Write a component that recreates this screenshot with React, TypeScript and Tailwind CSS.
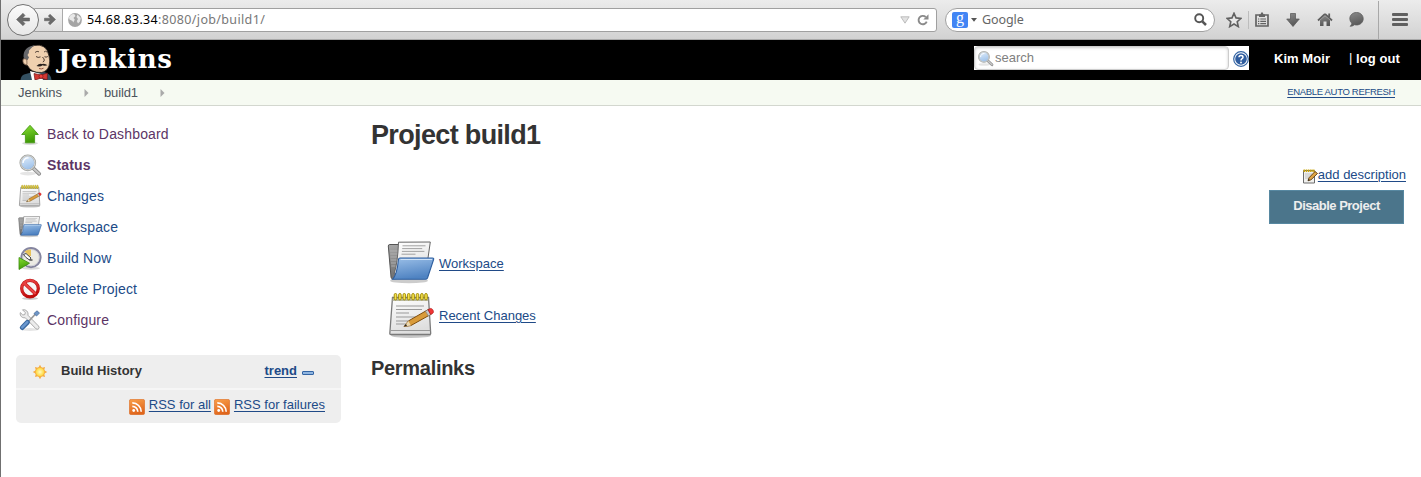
import React from "react";

const sans = "font-['Liberation_Sans',Arial,sans-serif]";
const chrome = "font-['Noto_Sans',sans-serif]";
const link = "underline underline-offset-2 decoration-1 text-[#204a87]";

type IconProps = { className?: string };

function Gradients() {
  const grads: [string, string, string][] = [
    ["green", "#8ae234", "#3f9a06"],
    ["blue", "#9cc0e8", "#4f83c2"],
    ["lens", "#e4f0fc", "#9fc2ea"],
    ["paper", "#ffffff", "#dedede"],
    ["grey", "#a8a8a8", "#6c6c6c"],
    ["tool", "#8a8a8a", "#585858"],
    ["feed", "#f9a04a", "#e0661c"],
    ["red", "#f04b4b", "#c00a0a"],
  ];
  return (
    <svg className="absolute size-0" aria-hidden="true">
      <defs>
        {grads.map(([id, a, b]) => (
          <linearGradient key={id} id={id} x1="0" y1="0" x2="0.3" y2="1">
            <stop offset="0" stopColor={a} />
            <stop offset="1" stopColor={b} />
          </linearGradient>
        ))}
        <radialGradient id="sun">
          <stop offset="0" stopColor="#fffbc0" />
          <stop offset="1" stopColor="#ffd42e" />
        </radialGradient>
      </defs>
    </svg>
  );
}

function UpArrow({ className }: IconProps) {
  return (
    <svg viewBox="0 0 24 24" className={className}>
      <ellipse cx="12" cy="21.3" rx="8" ry="1.6" fill="#000" opacity=".15" />
      <path d="M12 3.3 20.3 12.5H16.6V20.8H7.4V12.5H3.7Z" fill="url(#green)" stroke="#4a9a18" strokeWidth=".9" strokeLinejoin="round" />
    </svg>
  );
}

function Magnifier({ className }: IconProps) {
  return (
    <svg viewBox="0 0 24 24" className={className}>
      <ellipse cx="10" cy="20.6" rx="8" ry="1.8" fill="#000" opacity=".1" />
      <path d="m15.2 15.2 6 5.6" stroke="#8a8a8a" strokeWidth="3.8" strokeLinecap="round" />
      <path d="m15.2 15.2 6 5.6" stroke="#c8c8c8" strokeWidth="2" strokeLinecap="round" />
      <circle cx="9.8" cy="9.8" r="7.4" fill="url(#lens)" stroke="#a0a29e" strokeWidth="1.9" />
      <circle cx="9.8" cy="9.8" r="7.1" fill="none" stroke="#e4e4e4" strokeWidth=".8" />
      <path d="M5 10a5 5 0 0 1 5.5-5" stroke="#fff" strokeWidth="1.3" fill="none" />
    </svg>
  );
}

function Notepad({ className }: IconProps) {
  return (
    <svg viewBox="0 0 48 48" className={className}>
      <ellipse cx="24" cy="44.5" rx="20" ry="2.5" fill="#000" opacity=".22" />
      <path d="M5.5 6.5h36l2.2 36q0 1-1 1H3.8q-1 0-1-1Z" fill="url(#paper)" stroke="#7a7a7a" strokeWidth="1.3" />
      <path d="M3.8 39.5h39.4" stroke="#999" strokeWidth="1" />
      <path d="M5.8 7h35.4v3H5.6Z" fill="#b9b99f" />
      <path d="M9 15h28M9 18.5h26M9 22h13M9 26h20M9 30h17M9 33h14" stroke="#999" strokeWidth="1" />
      {[8.5, 12.9, 17.3, 21.7, 26.1, 30.5, 34.9, 39].map((x) => (
        <rect key={x} x={x - 1.3} y="2.5" width="2.6" height="6.4" rx="1.3" fill="#f5e04a" stroke="#9a8600" strokeWidth=".9" />
      ))}
      <path d="m17 35.5 4.5-5.6 20-11.5 2.7 4.8-20.4 11.4Z" fill="#d99b3a" stroke="#7f4c0a" strokeWidth="1" strokeLinejoin="round" />
      <path d="m17 35.5 4.5-5.6 2.3 4.7Z" fill="#ecd9b0" />
      <path d="m17 35.5 2-2.4 1 1.6Z" fill="#222" />
      <path d="m38.5 20.2 2.5-1.5 2.7 4.8-2.4 1.4Z" fill="#c9c9c9" stroke="#777" strokeWidth=".6" />
      <path d="m41 18.7 2.2-1.2c2-.8 4.5 3.3 2.6 4.7l-2.1 1.3Z" fill="#ef3535" stroke="#a11" strokeWidth=".6" />
    </svg>
  );
}

function SmallNote({ className }: IconProps) {
  return (
    <svg viewBox="0 0 16 16" className={className}>
      <path d="M1.500 2.500h11v12.500h-11Z" fill="#f0f0ee" stroke="#6c6c6c" strokeWidth="1" />
      <path d="M3 6h7M3 8h6M3 10h4" stroke="#b5b5b5" strokeWidth=".8" />
      <path d="M1.500 2.800h11.500" stroke="#c9a50a" strokeWidth="2.600" strokeDasharray="1.500 .7" />
      <path d="M6 12.800 7 9.800 13 3.500 15.500 5.500 9 11.800Z" fill="#e0a545" stroke="#5b3a0c" strokeWidth=".9" />
      <path d="M6 12.800 6.600 11 7.900 12.100Z" fill="#222" />
    </svg>
  );
}

function Folder({ className }: IconProps) {
  return (
    <svg viewBox="0 0 48 48" className={className}>
      <ellipse cx="22" cy="41.8" rx="19" ry="2.5" fill="#000" opacity=".2" />
      <path d="M1.300 7q0-1.500 1.500-1.500h10l1.600 2H38v29L5.500 40Q4 39.500 4 38Z" fill="url(#grey)" stroke="#555" strokeWidth="1" />
      <path d="M3 12h10M3.300 15h10M3.500 18h9M3.800 21h8M4 24h7M4.300 27h6" stroke="#b5b5b5" strokeWidth=".8" />
      <path d="M11.500 3.200 43.300 3 40 26 7 35Q10.800 24 11.500 3.200Z" fill="url(#paper)" stroke="#666" strokeWidth="1" />
      <path d="M15.500 6.800h23M15.200 9.600h20M14.900 12.400h22.500M14.500 15.200h14" stroke="#999" strokeWidth=".9" />
      <path d="M13 19H45.500q1.600 0 1.100 1.500L40.500 39q-.6 1.300-2 1.300H5.500q4.500-4 6-20 .2-1.300 1.500-1.300Z" fill="url(#blue)" stroke="#2f5f9f" strokeWidth="1.100" />
      <path d="M13.500 20.500H45" stroke="#cfe2f7" strokeWidth="1" />
    </svg>
  );
}

function BuildClock({ className }: IconProps) {
  return (
    <svg viewBox="0 0 24 24" className={className}>
      <ellipse cx="13" cy="22.300" rx="9" ry="1.500" fill="#000" opacity=".15" />
      <circle cx="13" cy="11.600" r="9.600" fill="#ecebe4" stroke="#85859f" strokeWidth="2" />
      <circle cx="13" cy="11.600" r="8.200" fill="none" stroke="#bfbfcf" strokeWidth=".6" />
      <path d="M11 10 6.500 5.500Q9.500 3.400 13 3.600V10Z" fill="#e8c35a" />
      <path d="M5.500 8.500 8 7.500l5 4.500-1.500 2L8 11.500Z" fill="#fff" stroke="#333" strokeWidth=".9" />
      <path d="M11.500 14h3" stroke="#333" strokeWidth="1.300" />
      <path d="M1 11.500 11.500 17.200 1 23.500Z" fill="url(#green)" stroke="#3b8a0d" strokeWidth=".8" strokeLinejoin="round" />
    </svg>
  );
}

function NoEntry({ className }: IconProps) {
  return (
    <svg viewBox="0 0 24 24" className={className}>
      <ellipse cx="12" cy="21.500" rx="8" ry="1.500" fill="#000" opacity=".2" />
      <circle cx="12" cy="11.600" r="8.300" fill="#f6f6f6" stroke="#b91414" strokeWidth="3.200" />
      <path d="m6.400 6.200 11.200 10.800" stroke="#c51818" strokeWidth="3.300" />
      <circle cx="12" cy="11.600" r="8.300" fill="none" stroke="url(#red)" strokeWidth="2.200" />
      <path d="m6.400 6.200 11.200 10.800" stroke="#ea4444" strokeWidth="2.200" />
    </svg>
  );
}

function Tools({ className }: IconProps) {
  return (
    <svg viewBox="0 0 24 24" className={className}>
      <ellipse cx="12" cy="21.500" rx="9" ry="1.400" fill="#000" opacity=".1" />
      <path d="M4.500 1.800 7.300 4.600 6.800 6.600 4.800 7 2.300 4.600C1.600 8 4.300 10.300 7.200 9.700L17.800 20.700q1.600 1.200 2.800 0 1.200-1.400-.2-2.800L9.900 7.200C10.700 3.800 8 1.200 4.500 1.800Z" fill="#ececec" stroke="#a2a2a2" strokeWidth=".9" />
      <path d="m9.500 14.500 8-8.500" stroke="#999" strokeWidth="1.800" />
      <path d="m16 5.500 3-2.700 2.500 2.300-3 2.900Z" fill="#6e96c6" stroke="#4a6f9f" strokeWidth=".8" />
      <path d="m4.200 19.600 5.300-5.400" stroke="#3a689f" strokeWidth="4.800" strokeLinecap="round" />
      <path d="m4.200 19.400 5.100-5.200" stroke="#6a98d0" strokeWidth="2.400" strokeLinecap="round" />
    </svg>
  );
}

function Sun({ className }: IconProps) {
  return (
    <svg viewBox="0 0 16 16" className={className}>
      {[0, 45, 90, 135, 180, 225, 270, 315].map((a) => (
        <path key={a} d="M8 .8 9.700 4H6.300Z" fill="#f5a83a" transform={`rotate(${a} 8 8)`} />
      ))}
      <circle cx="8" cy="8" r="4.600" fill="url(#sun)" stroke="#f5b045" strokeWidth=".9" />
    </svg>
  );
}

function Feed() {
  return (
    <svg viewBox="0 0 16 16" className="size-4 shrink-0">
      <rect x=".3" y=".3" width="15.400" height="15.400" rx="2" fill="url(#feed)" stroke="#d96c28" strokeWidth=".6" />
      <circle cx="4.700" cy="11.500" r="1.400" fill="#fff" />
      <path d="M3.300 7.300a5.500 5.500 0 0 1 5.500 5.500M3.300 3.900a8.900 8.900 0 0 1 8.900 8.900" fill="none" stroke="#fff" strokeWidth="1.700" />
    </svg>
  );
}

function Butler() {
  return (
    <svg viewBox="0 0 32 36" className="h-9 w-8 shrink-0">
      <path d="M.500 36Q1 31.500 4 30.500L13 28l11 0q7 1.500 7.500 8Z" fill="#335061" />
      <path d="M10 27 21 30 23 36H12Z" fill="#fff" />
      <path d="M7.500 21.500Q2.500 21 2.800 16 3 14 5 14 4 4.500 14 1.500 26.500-1 29 12 30.500 17 29 22 27 27.500 21.500 28.500 11 29 7.500 21.500Z" fill="#efd0af" stroke="#2b2320" strokeWidth=".8" />
      <path d="M15 1.300Q3.500 2.500 3.500 12.500q.3 2 1.500 3.500h2.500L9 13.500 7.500 11Q9.500 8.500 9 6.500 11.500 3 15 1.300Z" fill="#66676a" />
      <path d="M3 15.500q2-1.800 3.800.3l.2 4.700q-4.500.5-4-5Z" fill="#efd0af" stroke="#6b5040" strokeWidth=".7" />
      <path d="M15 8.500q2-2 4-.7M24 8q1.500-1.500 3 0" stroke="#4b3b32" strokeWidth=".9" fill="none" />
      <path d="M16 12.500q2 1.700 4.500.4M24.500 12.700q1.500 1 3.300-.2M22.500 13q3.500 3.800.3 5" stroke="#3b2b25" strokeWidth=".9" fill="none" />
      <path d="M16.500 22q3-3.200 5.500-2 3-1 5.500 1.300-2.500 1-4.800-.1-2.700 2-6.200.8Z" fill="#2b2320" />
      <path d="M19 24.500q2.500 1 4.500-.3" stroke="#8a4a3a" strokeWidth=".9" fill="none" />
      <path d="M14 29.500 21 31l6.500-2-.3 6.800-6.200-1.600-6 1.800Z" fill="#d33833" stroke="#6b1515" strokeWidth=".7" />
      <circle cx="21" cy="32.300" r="2" fill="#ef3d3a" stroke="#6b1515" strokeWidth=".6" />
    </svg>
  );
}

function NavArrow({ flip, className }: { flip?: boolean; className?: string }) {
  return (
    <svg viewBox="0 0 14 14" className={className}>
      <path
        d="M.500 7 7 .800 9 2.900 6.500 5.500H13.500V8.500H6.500L9 11.100 7 13.200Z"
        fill="#6b6b6b"
        stroke="#555"
        strokeWidth=".5"
        transform={flip ? "matrix(-1 0 0 1 14 0)" : undefined}
      />
    </svg>
  );
}

function BrowserBar() {
  return (
    <div className={`${chrome} flex h-10 items-center border-b border-[#a9a9a9] bg-linear-to-b from-[#ececec] to-[#d2d2d2] pl-[6px]`}>
      <div className="z-10 flex size-8 shrink-0 items-center justify-center rounded-full border border-[#727272] bg-linear-to-b from-[#fbfbfb] to-[#e8e8e8]">
        <NavArrow className="h-[15px] w-[14px]" />
      </div>
      <div className="-ml-[5px] flex h-6 w-[903px] shrink-0 items-center overflow-hidden rounded-r-[3px] border border-[#a0a0a0] bg-white">
        <div className="flex h-full w-[28px] shrink-0 items-center justify-end border-r border-[#aaa] bg-linear-to-b from-[#f4f4f4] to-[#dedede] pr-[6px]">
          <NavArrow flip className="h-[13px] w-[12px]" />
        </div>
        <svg viewBox="0 0 14 14" className="ml-[5px] size-[14px] shrink-0">
          <circle cx="7" cy="7" r="6.900" fill="#a5a5a5" />
          <path d="M1 4.500Q3 .5 6.500 1.200L7.500 3 5.500 5 6.800 6.800 5.200 9.500 4.500 8 1.500 6.500ZM9.500 1.500 12.800 5 12 8.500 10 10.500 8.800 8 10 6 8.500 4Z" fill="#e8e8e8" />
        </svg>
        <div className="mt-px ml-[5px] text-[12.500px] leading-6 tracking-[0.350px] whitespace-nowrap text-[#777]">
          <span className="text-black">54.68.83.34</span>:8080/job/build1/
        </div>
        <svg viewBox="0 0 10 8" className="mr-[7px] ml-auto h-[8px] w-[10px]">
          <path d="M.800.800h8.400L5 7.200Z" fill="#e2e2e2" stroke="#b0b0b0" strokeWidth=".8" />
        </svg>
        <svg viewBox="0 0 12 12" className="mr-[7px] size-3">
          <path d="M9.700 7.600A4.200 4.200 0 1 1 8.700 3" fill="none" stroke="#8a8a8a" strokeWidth="1.900" />
          <path d="M11.500.200V5.400H6.300Z" fill="#8a8a8a" />
        </svg>
      </div>
      <div className="ml-[8px] flex h-6 w-[270px] shrink-0 items-center rounded-full border border-[#a0a0a0] bg-white pr-[7px] pl-[6px]">
        <span className="flex size-4 items-center justify-center rounded-[2px] bg-[#4285f4] pb-[3px] font-['Liberation_Serif',serif] text-[16px] leading-none text-white">g</span>
        <svg viewBox="0 0 6 4" className="ml-[3px] h-1 w-[6px]">
          <path d="M0 0h6L3 3.800Z" fill="#555" />
        </svg>
        <span className="mt-[2px] ml-[5px] text-[12.500px] tracking-[-0.100px] text-[#666]">Google</span>
        <svg viewBox="0 0 13 13" className="ml-auto size-[13px]">
          <circle cx="5.200" cy="5.200" r="4" fill="none" stroke="#555" strokeWidth="1.900" />
          <path d="m8.300 8.300 3.700 3.700" stroke="#555" strokeWidth="2.500" />
        </svg>
      </div>
      <svg viewBox="0 0 16 16" className="ml-[11px] size-4 shrink-0">
        <path d="M8 1.300 10 5.900 15 6.400 11.200 9.700 12.300 14.600 8 12 3.700 14.600 4.800 9.700 1 6.400 6 5.900Z" fill="#e8e8e8" stroke="#606060" strokeWidth="1.600" />
      </svg>
      <div className="ml-[6px] h-[18px] w-px bg-[#bdbdbd]" />
      <svg viewBox="0 0 14 15" className="ml-[6px] h-[15px] w-[14px] shrink-0">
        <path d="M1 3h12v11H1Z" fill="none" stroke="#636363" strokeWidth="1.700" />
        <path d="M4 2.500h1.500Q6 .300 7 .300t1.500 2.200H10V5H4Z" fill="#636363" />
        <path d="M3 7h1.300M5.300 7H11M3 9.300h1.300M5.300 9.300H11M3 11.600h1.300M5.300 11.600H11" stroke="#636363" strokeWidth="1.200" />
      </svg>
      <svg viewBox="0 0 14 14" className="ml-[17px] size-[14px] shrink-0">
        <path d="M4.500.500h5V6H13.300L7 13.500.700 6H4.500Z" fill="url(#tool)" stroke="#555" strokeWidth=".7" />
      </svg>
      <svg viewBox="0 0 16 15" className="ml-[17px] h-[15px] w-4 shrink-0">
        <path d="M8 2 15 8.500M8 2 1 8.500M12.200 1.500V5" stroke="#606060" strokeWidth="1.800" fill="none" />
        <path d="M3 8.200 8 3.800l5 4.400V14H9.500V9.500h-3V14H3Z" fill="url(#tool)" />
      </svg>
      <svg viewBox="0 0 15 15" className="ml-[16px] size-[15px] shrink-0">
        <path d="M7.500.500c3.900 0 6.700 2.700 6.700 6.200s-2.800 6.300-6.700 6.300q-1 0-2-.3Q3.500 14.300 1.200 14.300 2.700 13 2.800 11.200.800 9.500.800 6.700C.800 3.200 3.600.500 7.500.500Z" fill="url(#tool)" stroke="#5e5e5e" strokeWidth=".8" />
      </svg>
      <div className="ml-[14px] h-[38px] w-px bg-[#a8a8a8]" />
      <div className="ml-[13px] flex w-4 shrink-0 flex-col gap-[2px]">
        <div className="h-[3px] rounded-[1px] bg-[#5f5f5f]" />
        <div className="h-[3px] rounded-[1px] bg-[#5f5f5f]" />
        <div className="h-[3px] rounded-[1px] bg-[#5f5f5f]" />
      </div>
    </div>
  );
}

function Header() {
  return (
    <header className="flex h-10 items-start bg-black pl-[19px] text-white">
      <div className="mt-1">
        <Butler />
      </div>
      <span className="ml-[6px] w-[120px] font-['DejaVu_Serif',serif] text-[26px] leading-[38px] font-bold tracking-[0.800px]">Jenkins</span>
      <div className="mt-[6px] mr-[25px] ml-auto flex h-6 w-[275px] items-center bg-white">
        <div className="flex h-full w-[255px] items-center rounded-[4px] border border-[#ccc] pl-[2px] shadow-[inset_0_1px_3px_#ccc]">
          <Magnifier className="size-[17px]" />
          <span className="ml-[1px] text-[13px] text-[#808080]">search</span>
        </div>
        <svg viewBox="0 0 16 16" className="mt-[2px] ml-[4px] size-4">
          <circle cx="8" cy="8" r="7.300" fill="#fff" stroke="#3465a4" strokeWidth="1.200" />
          <circle cx="8" cy="8" r="5.800" fill="#2f5d9f" />
          <path d="M6 6.300Q6 4.500 8 4.500t2 1.700Q10 7.300 8.800 7.900 8 8.400 8 9.500" fill="none" stroke="#fff" strokeWidth="1.500" />
          <circle cx="8" cy="11.500" r=".95" fill="#fff" />
        </svg>
      </div>
      <span className="w-[75px] text-[13px] leading-[37px] font-bold tracking-[0.050px] whitespace-nowrap">Kim Moir</span>
      <span className="w-[7px] text-[13px] leading-[36px]">|</span>
      <span className="w-[65px] text-[13px] leading-[37px] font-bold tracking-[0.100px] whitespace-nowrap">log out</span>
    </header>
  );
}

function Crumbs() {
  const arrow = (
    <svg viewBox="0 0 5 8" className="mt-px h-2 w-[5px]">
      <path d="M.500 0 4.500 4 .500 8Z" fill="#aaa" />
    </svg>
  );
  return (
    <nav className="flex h-[26px] items-center border-b border-[#d3d7cf] bg-[#f6faf2] pl-[17px] text-[13px] text-[#4d545d]">
      <span className="w-[66px]">Jenkins</span>
      {arrow}
      <span className="ml-[15px] w-[56px] tracking-[-0.150px]">build1</span>
      {arrow}
      <a className={`mr-[26px] ml-auto text-[9.500px] tracking-[-0.320px] whitespace-nowrap ${link}`}>ENABLE AUTO REFRESH</a>
    </nav>
  );
}

const tasks: { label: string; Icon: React.FC<IconProps>; tone: string }[] = [
  { label: "Back to Dashboard", Icon: UpArrow, tone: "text-[#5c3566]" },
  { label: "Status", Icon: Magnifier, tone: "font-bold text-[#5c3566]" },
  { label: "Changes", Icon: Notepad, tone: "text-[#204a87]" },
  { label: "Workspace", Icon: Folder, tone: "text-[#204a87]" },
  { label: "Build Now", Icon: BuildClock, tone: "text-[#204a87]" },
  { label: "Delete Project", Icon: NoEntry, tone: "text-[#204a87]" },
  { label: "Configure", Icon: Tools, tone: "text-[#5c3566]" },
];

function Sidebar() {
  return (
    <aside className="w-[340px] shrink-0 pt-3 pl-[15px]">
      <ul>
        {tasks.map(({ label, Icon, tone }) => (
          <li key={label} className="flex h-[31px] items-center pl-[2px]">
            <Icon className="mt-px size-6" />
            <a className={`mt-[2px] ml-[5px] text-[14px] leading-[29px] tracking-[0.160px] whitespace-nowrap ${tone}`}>{label}</a>
          </li>
        ))}
      </ul>
      <section className="mt-5 overflow-hidden rounded-[5px] bg-[#eee]">
        <div className="flex h-[33px] items-center pl-[16px] text-[13px] font-bold text-[#333]">
          <Sun className="mt-px size-4" />
          <span className="-mt-px ml-[13px]">Build History</span>
          <a className={`-mt-px mr-[5px] ml-auto ${link}`}>trend</a>
          <div className="mt-[2px] mr-[27px] h-1 w-3 rounded-[1px] border border-[#3465a4] bg-[#8fb5e0]" />
        </div>
        <div className="flex h-[35px] items-center justify-end border-t-2 border-[#f6f6f6] pr-4 text-[13px]">
          <Feed />
          <a className={`-mt-[3px] mr-[3px] ml-[4px] ${link}`}>RSS for all</a>
          <Feed />
          <a className={`-mt-[3px] ml-[4px] ${link}`}>RSS for failures</a>
        </div>
      </section>
    </aside>
  );
}

function Main() {
  return (
    <main className="flex grow flex-col pl-[30px] text-[#333]">
      <h1 className="mt-[9px] h-10 text-[27px] leading-10 font-bold tracking-[-0.650px] whitespace-nowrap">Project build1</h1>
      <div className="mt-[10px] mr-[15px] flex h-[19px] items-center self-end text-[13px]">
        <SmallNote className="mt-[3px] size-4" />
        <a className={link}>add description</a>
      </div>
      <button className="mt-[6px] mr-[17px] h-[34px] w-[135px] self-end border border-[#5788a1] bg-[#4b758b] pb-[3px] text-[13px] font-bold tracking-[-0.500px] text-[#eee]">
        Disable Project
      </button>
      <div className="mt-[13px] flex h-[52px] items-center pl-[16px] text-[13px]">
        <Folder className="size-12" />
        <a className={`mt-px ml-[4px] ${link}`}>Workspace</a>
      </div>
      <div className="flex h-[52px] items-center pl-[16px] text-[13px]">
        <Notepad className="size-12" />
        <a className={`mt-px ml-[4px] ${link}`}>Recent Changes</a>
      </div>
      <h2 className="mt-[15px] text-[20px] leading-6 font-bold tracking-[-0.300px]">Permalinks</h2>
    </main>
  );
}

export default function App() {
  return (
    <div className={`${sans} relative h-[477px] w-[1421px] overflow-hidden border-l border-[#707070] bg-white`}>
      <Gradients />
      <BrowserBar />
      <Header />
      <Crumbs />
      <div className="flex">
        <Sidebar />
        <Main />
      </div>
    </div>
  );
}
